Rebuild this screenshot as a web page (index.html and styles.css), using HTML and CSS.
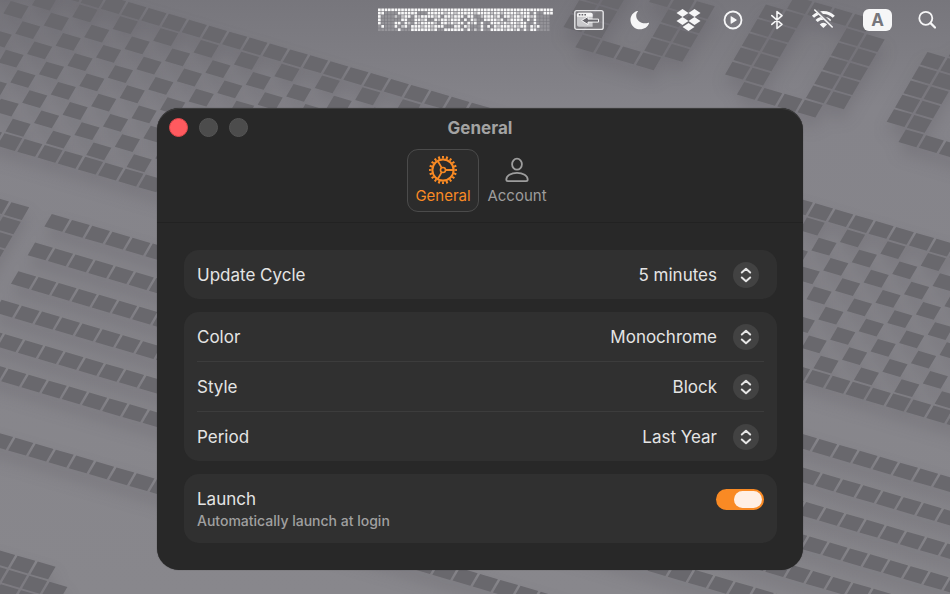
FILE: index.html
```html
<!DOCTYPE html>
<html lang="en">
<head>
<meta charset="utf-8">
<meta name="viewport" content="width=device-width, initial-scale=1">
<title>General</title>
<link rel="stylesheet" href="styles.css">
</head>
<body>
<svg class="wallpaper" viewBox="0 0 950 594" preserveAspectRatio="xMidYMid slice" aria-hidden="true">
  <path id="tiles" class="tiles" d=""/>
</svg>

<header class="menubar">
  <svg class="graph" id="graph" width="176" height="24" viewBox="0 0 176 24" aria-hidden="true"></svg>
  <svg width="30" height="24" viewBox="0 0 30 24" aria-hidden="true">
    <rect x="0.8" y="2.6" width="28.4" height="18.8" rx="2" fill="#fff" fill-opacity=".12" stroke="#e4e4e6" stroke-width="1.4"/>
    <path d="M3 6.5Q3 4.800 4.700 4.800H17Q18.600 4.800 18.600 6.500V18.800H5Q3 18.800 3 17Z" fill="#c9c9cc"/>
    <path d="M3 6.500Q3 4.800 4.700 4.800H17Q18.600 4.800 18.600 6.500V8.800H3Z" fill="#f4f4f5"/>
    <path d="M4.800 6.700h1.600M7.600 6.700h1.600M10.400 6.700h1.600" stroke="#66656b" stroke-width="1.600"/>
    <path d="M7.500 12.500 14 8.600V11.100H24.500V14.100H14V16.600Z" fill="#66656b" stroke="#f4f4f5" stroke-width="1"/>
  </svg>
  <svg width="32" height="24" viewBox="0 0 32 24" aria-hidden="true">
    <path d="M13.200 3C8.800 4.300 6.300 8.200 6.500 12.400C6.800 17.500 10.900 21.300 16 21.300C20.300 21.300 23.800 19 25.100 15.300C25.200 14.800 24.900 14.600 24.400 14.800C18 17 12 12.400 12.200 7.500C12.200 6 12.800 4.800 13.700 3.700C14.100 3.200 13.800 2.800 13.200 3Z" fill="#f6f6f7"/>
  </svg>
  <svg width="25" height="24" viewBox="0 0 25 24" aria-hidden="true">
    <path d="M6.500 1 12.500 5 6.500 9 .5 5ZM18.500 1 24.500 5 18.500 9 12.500 5ZM6.500 9 12.500 13 6.500 17 .5 13ZM18.500 9 24.500 13 18.500 17 12.500 13ZM12.500 15 18.500 19 12.500 23 6.500 19Z" fill="#f6f6f7"/>
  </svg>
  <svg width="24" height="24" viewBox="0 0 24 24" aria-hidden="true">
    <circle cx="12" cy="12" r="8.500" fill="none" stroke="#f6f6f7" stroke-width="1.800"/>
    <path d="M9.600 8.700Q9.600 8 10.200 8.300L15.400 11.500Q16 12 15.400 12.500L10.200 15.700Q9.600 16 9.600 15.300Z" fill="#f6f6f7"/>
  </svg>
  <svg width="24" height="24" viewBox="0 0 24 24" aria-hidden="true">
    <path d="M6.800 7.600 17 16.300 12 20.500V3.500L17 7.700 6.800 16.400" fill="none" stroke="#f6f6f7" stroke-width="1.600" stroke-linejoin="round" stroke-linecap="round"/>
  </svg>
  <svg width="28" height="24" viewBox="0 0 28 24" aria-hidden="true">
    <g fill="none" stroke="#f6f6f7" stroke-width="3">
      <path d="M4 8.800A14.600 14.600 0 0 1 24.800 8.800"/>
      <path d="M7.600 13A9.600 9.600 0 0 1 21.200 13"/>
    </g>
    <path d="M14.400 20 10.700 16.500A5 5 0 0 1 18.100 16.500Z" fill="#f6f6f7"/>
    <path d="M8 2.400 23 17.400" stroke="#7a797f" stroke-width="3.600"/>
    <path d="M5.800 2 23.200 19" stroke="#f6f6f7" stroke-width="1.600" stroke-linecap="round"/>
  </svg>
  <span class="input-source"><span class="input-badge">A</span></span>
  <svg width="18" height="24" viewBox="0 0 18 24" aria-hidden="true">
    <circle cx="7.800" cy="10.300" r="6.500" fill="none" stroke="#f6f6f7" stroke-width="1.800"/>
    <path d="M12.600 15.100 17 19.500" stroke="#f6f6f7" stroke-width="2.200" stroke-linecap="round"/>
  </svg>
</header>

<main class="desktop">
  <section class="window" aria-labelledby="window-title">
    <div class="titlebar">
      <div class="lights">
        <button class="light light-close" type="button" aria-label="Close"></button>
        <button class="light" type="button" aria-label="Minimize"></button>
        <button class="light" type="button" aria-label="Zoom"></button>
      </div>
      <h1 class="title" id="window-title">General</h1>
    </div>

    <nav class="tabs">
      <button class="tab tab-active" type="button">
        <svg width="30" height="30" viewBox="0 0 30 30" fill="none" stroke="currentColor" aria-hidden="true">
          <circle cx="15" cy="15" r="10.600" stroke-width="2"/>
          <circle cx="15" cy="15" r="12.700" stroke-width="2.600" pathLength="40" stroke-dasharray="1 1" stroke-dashoffset=".5"/>
          <circle cx="15" cy="15" r="2.500" stroke-width="1.600"/>
          <path d="M17.500 15H25.400M13.750 12.850 9.800 6M13.750 17.150 9.800 24" stroke-width="1.800"/>
        </svg>
        <span>General</span>
      </button>
      <button class="tab" type="button">
        <svg width="30" height="30" viewBox="0 0 30 30" fill="none" stroke="currentColor" stroke-width="1.800" aria-hidden="true">
          <ellipse cx="15" cy="9.200" rx="4.900" ry="5.500"/>
          <path d="M5.900 26.200Q4.300 26.200 4.300 24.600C4.300 21 9 17.800 15 17.800S25.700 21 25.700 24.600Q25.700 26.200 24.100 26.200Z"/>
        </svg>
        <span>Account</span>
      </button>
    </nav>

    <form class="settings">
      <div class="card">
        <div class="row">
          <label for="cycle">Update Cycle</label>
          <div class="picker">
            <select id="cycle"><option>5 minutes</option></select>
            <svg class="chevrons" viewBox="0 0 26 26" aria-hidden="true"><circle cx="13" cy="13" r="13"/><path d="M8.800 10.500 13 6.800 17.200 10.500M8.800 15.500 13 19.200 17.200 15.500"/></svg>
          </div>
        </div>
      </div>

      <div class="card">
        <div class="row">
          <label for="color">Color</label>
          <div class="picker">
            <select id="color"><option>Monochrome</option></select>
            <svg class="chevrons" viewBox="0 0 26 26" aria-hidden="true"><circle cx="13" cy="13" r="13"/><path d="M8.800 10.500 13 6.800 17.200 10.500M8.800 15.500 13 19.200 17.200 15.500"/></svg>
          </div>
        </div>
        <div class="row">
          <label for="style">Style</label>
          <div class="picker">
            <select id="style"><option>Block</option></select>
            <svg class="chevrons" viewBox="0 0 26 26" aria-hidden="true"><circle cx="13" cy="13" r="13"/><path d="M8.800 10.500 13 6.800 17.200 10.500M8.800 15.500 13 19.200 17.200 15.500"/></svg>
          </div>
        </div>
        <div class="row">
          <label for="period">Period</label>
          <div class="picker">
            <select id="period"><option>Last Year</option></select>
            <svg class="chevrons" viewBox="0 0 26 26" aria-hidden="true"><circle cx="13" cy="13" r="13"/><path d="M8.800 10.500 13 6.800 17.200 10.500M8.800 15.500 13 19.200 17.200 15.500"/></svg>
          </div>
        </div>
      </div>

      <div class="card">
        <div class="row row-launch">
          <div class="launch-text">
            <label for="launch">Launch</label>
            <p class="hint" id="launch-hint">Automatically launch at login</p>
          </div>
          <input class="switch" id="launch" type="checkbox" role="switch" aria-describedby="launch-hint" checked>
        </div>
      </div>
    </form>
  </section>
</main>
<script src="script.js"></script>
</body>
</html>
```

FILE: styles.css
```css
* {
  box-sizing: border-box;
}

body {
  margin: 0;
  min-height: 100vh;
  overflow: hidden;
  background: linear-gradient(#77767c, #85848a 18%, #88878c);
  color: #e4e4e4;
  font-family: Inter, "Liberation Sans", sans-serif;
  font-size: 17px;
  line-height: 24px;
}

button,
select {
  font: inherit;
  color: inherit;
}

.wallpaper {
  position: absolute;
  inset: 0;
  width: 100%;
  height: 100%;
  z-index: -1;
}

.tiles {
  fill: #69686d;
  filter: drop-shadow(0 10px 8px rgba(74, 73, 80, 0.24));
}

/* Menu bar */
.menubar {
  display: flex;
  justify-content: flex-end;
  align-items: center;
  gap: 20px;
  height: 40px;
  padding-right: 14px;
}

.menubar svg {
  flex: none;
}

.input-source {
  display: flex;
  justify-content: center;
  width: 41px;
}

.input-badge {
  width: 29px;
  border-radius: 6px;
  background: #f6f6f7;
  color: #77767c;
  font-size: 17px;
  font-weight: 700;
  line-height: 22px;
  text-align: center;
}

/* Window */
.desktop {
  padding: 68px 0 0 10px;
}

.window {
  width: 68vw;
  min-width: 480px;
  margin: 0 auto;
  border-radius: 22px;
  background: #282828;
  box-shadow: 0 0 1px rgba(0, 0, 0, 0.6), inset 0 1px 0 #3c3c3c;
}

.titlebar {
  display: grid;
  grid-template-columns: 1fr auto 1fr;
  align-items: center;
  height: 39px;
  padding: 0 12px;
}

.lights {
  display: flex;
  gap: 11px;
}

.light {
  width: 19px;
  height: 19px;
  padding: 0;
  border: 1px solid #555;
  border-radius: 50%;
  background: #4c4c4c;
}

.light-close {
  border-color: #e0484b;
  background: #ff5a5f;
}

.title {
  margin: 0;
  color: #a3a3a3;
  font-size: 17px;
  font-weight: 700;
}

.tabs {
  display: flex;
  justify-content: center;
  gap: 2px;
  padding: 2px 0 10px;
  border-bottom: 1px solid #222;
}

.tab {
  display: flex;
  flex-direction: column;
  align-items: center;
  width: 72px;
  padding: 5px 0 4px;
  border: 1px solid transparent;
  border-radius: 11px;
  background: none;
  color: #9d9d9d;
  font-size: 15px;
  line-height: 22px;
}

.tab-active {
  border-color: #4b4b4b;
  background: #2c2c2c;
  color: #f98a24;
}

/* Settings */
.settings {
  display: grid;
  gap: 13px;
  padding: 27px 26px 27px 27px;
}

.card {
  padding: 0 13px;
  border-radius: 15px;
  background: #303030;
}

.row {
  display: flex;
  justify-content: space-between;
  align-items: center;
  height: 49px;
}

.row + .row {
  height: 50px;
  border-top: 1px solid #3c3c3c;
}

.picker {
  display: grid;
  align-items: center;
  margin-right: 5px;
}

.picker select,
.chevrons {
  grid-area: 1 / 1;
}

.picker select {
  height: 26px;
  padding: 0 42px 0 0;
  border: 0;
  background: none;
  appearance: none;
  text-align-last: right;
}

.chevrons {
  justify-self: end;
  width: 26px;
  height: 26px;
  pointer-events: none;
}

.chevrons circle {
  fill: #424242;
}

.chevrons path {
  fill: none;
  stroke: #e6e6e6;
  stroke-width: 2;
  stroke-linecap: round;
  stroke-linejoin: round;
}

.row-launch {
  align-items: flex-start;
  height: auto;
  padding: 13px 0 12px;
}

.hint {
  margin: 0;
  color: #a0a0a0;
  font-size: 14px;
  font-weight: 500;
  line-height: 20px;
}

.switch {
  width: 48px;
  height: 21px;
  margin: 2px 0 0;
  padding: 2px;
  border-radius: 11px;
  background: #555;
  appearance: none;
}

.switch::before {
  content: "";
  display: block;
  width: 28px;
  height: 17px;
  border-radius: 9px;
  background: #ffefe4;
}

.switch:checked {
  background: #f98a24;
}

.switch:checked::before {
  margin-left: auto;
}
```

FILE: script.js
```js
// Wallpaper: tiles on one slanted lattice.
// A step in i moves along a row, a step in j moves to the next row.
const A = [20.2, 5.92];
const B = [-8.364, 14.295];
const ORIGIN = [846.7, 28.3];
const FILL = 0.88;
const parts = [];

function tile(i, j) {
  const x = ORIGIN[0] + A[0] * i + B[0] * j;
  const y = ORIGIN[1] + A[1] * i + B[1] * j;
  if (x < -40 || x > 990 || y < -40 || y > 620) return;
  const a = A.map((v) => v * FILL);
  const b = B.map((v) => v * FILL);
  parts.push(`M${x} ${y}l${a[0]} ${a[1]}l${b[0]} ${b[1]}l${-a[0]} ${-a[1]}z`);
}

function run(from, to, j) {
  for (let i = from; i <= to; i++) tile(i, j);
}

// Checkered band between two solid edges
run(-45, 30, 11);
run(-45, 30, 21);
for (let j = 12; j <= 20; j++) {
  for (let i = -45; i <= 30; i++) if ((i + j) & 1) tile(i, j);
}

// Stripes under the band
for (const j of [25, 27, 29, 31, 33, 35]) run(-29, 30, j);
run(-45, 30, 39);

// Blocks on the left edge
for (let j = 25; j <= 35; j++) run(-36, -31, j);
run(-36, -21, 46);
run(-36, -20, 47);
run(-36, -20, 48);

// Round letters along the top
for (const s of [0, 8]) {
  run(s - 3, s, -1);
  for (let j = 0; j <= 4; j++) {
    run(s - 4, s - 3, j);
    run(s, s + 1, j);
  }
  run(s - 3, s, 5);
}
run(-9, -9, 1);
for (let j = 1; j <= 4; j++) {
  run(-12, -11, j);
  run(-8, -7, j);
}
run(-11, -8, 5);

document.getElementById("tiles").setAttribute("d", parts.join(""));

// Contribution graph: one column per week, one row per weekday.
const WEEKS = [
  "#####################################################",
  "##....######...#####+##+#####+####+##+####+###.#..###",
  "#....+.+##.#+####+#.##+###.##..+###+#.##+##+##+#....",
  "#......##..##+#..#+##+###.#.#+..####+#.+####.#.#....",
  "#....##.#+.#+####+.##+#+##.#+#.#..###+#+##+##..#....",
  ".#...#.+#.###+##+###...##.#+...#.#.#+###+#+##.#+#...",
  "......#...######+#..######.#.+.#..####+##+#.#.##...."
];
const OPACITY = { "#": 0.95, "+": 0.6, ".": 0.2 };
document.getElementById("graph").innerHTML = WEEKS.map((week, y) =>
  [...week].map((c, x) =>
    `<rect x="${(x * 3.31).toFixed(2)}" y="${(0.5 + y * 3.31).toFixed(2)}" width="2.7" height="2.7" fill="#fff" fill-opacity="${OPACITY[c]}"/>`
  ).join("")
).join("");
```
